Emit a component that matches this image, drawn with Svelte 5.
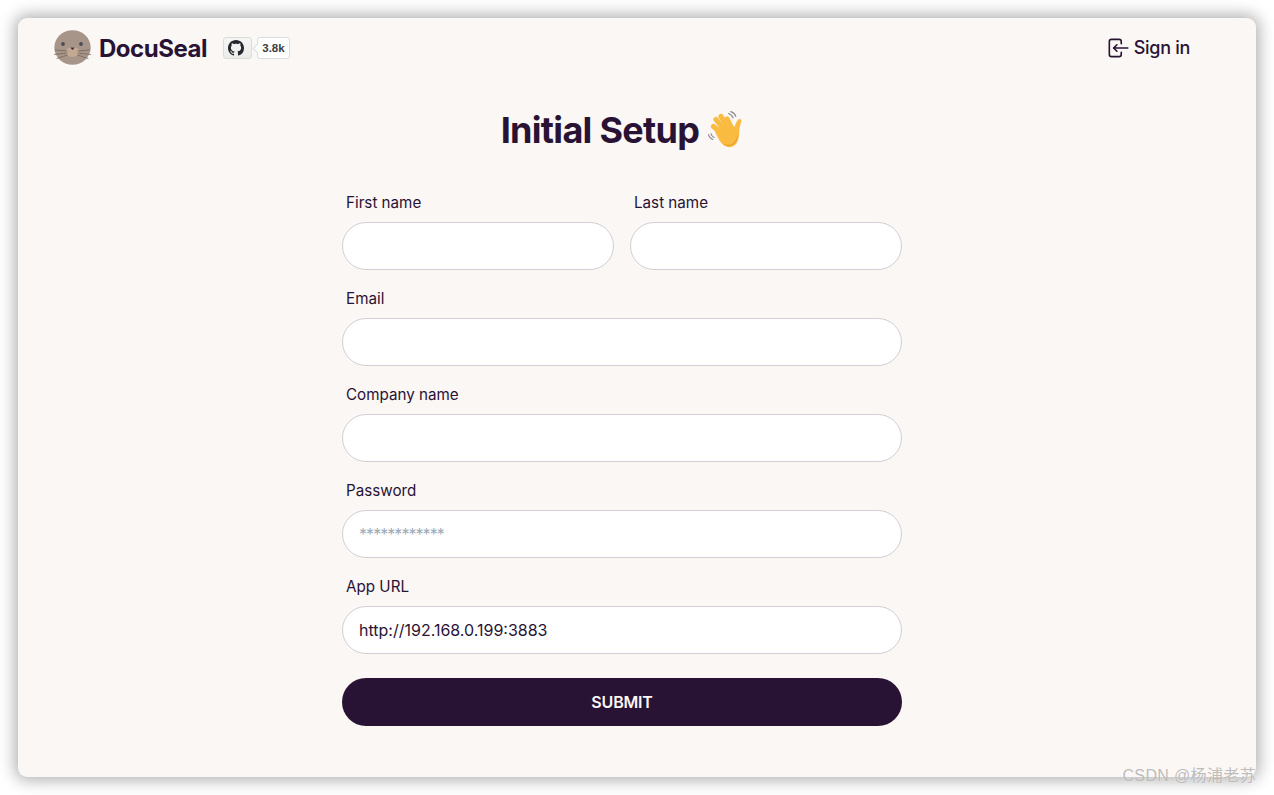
<script>
  const nameFields = ['First name', 'Last name'];
  const wideFields = [
    { label: 'Email', type: 'email', value: '', placeholder: '' },
    { label: 'Company name', type: 'text', value: '', placeholder: '' },
    { label: 'Password', type: 'text', value: '', placeholder: '************' },
    { label: 'App URL', type: 'text', value: 'http://192.168.0.199:3883', placeholder: '' }
  ];
</script>

<div class="page">
  <div class="window">
    <div class="inner">
      <header>
        <div class="brand">
          <a class="logo" href="#top">
            <svg class="seal" viewBox="0 0 37 35" width="37" height="35" aria-hidden="true">
              <ellipse cx="18.5" cy="17.5" rx="18.2" ry="17.3" fill="#a8958a" />
              <ellipse cx="18.5" cy="22" rx="7" ry="5" fill="#c2a994" />
              <circle cx="9" cy="14" r="1.9" fill="#4a4a58" />
              <circle cx="27" cy="14" r="1.9" fill="#4a4a58" />
              <path d="M16.200 17.500h4.600l-2.300 2.500z" fill="#3b3038" />
              <g stroke="#76665d" stroke-width="0.8" fill="none" stroke-linecap="round">
                <path d="M13 21 1.500 20M13 23 .5 24.500M13.500 25 3 28.500" />
                <path d="M24 21 35.500 20M24 23 36.500 24.500M23.500 25 34 28.500" />
              </g>
            </svg>
            <span class="wordmark">DocuSeal</span>
          </a>
          <div class="gh">
            <span class="gh-btn">
              <svg viewBox="0 0 16 16" width="16" height="16" aria-hidden="true"><path fill="#24292f" d="M8 0C3.58 0 0 3.58 0 8c0 3.54 2.29 6.53 5.47 7.59.4.07.55-.17.55-.38 0-.19-.01-.82-.01-1.49-2.01.37-2.53-.49-2.69-.94-.09-.23-.48-.94-.82-1.13-.28-.15-.68-.52-.01-.53.63-.01 1.08.58 1.23.82.72 1.21 1.87.87 2.33.66.07-.52.28-.87.51-1.07-1.78-.2-3.64-.89-3.64-3.95 0-.87.31-1.59.82-2.15-.08-.2-.36-1.02.08-2.12 0 0 .67-.21 2.2.82.64-.18 1.32-.27 2-.27.68 0 1.36.09 2 .27 1.53-1.04 2.2-.82 2.2-.82.44 1.1.16 1.92.08 2.12.51.56.82 1.27.82 2.15 0 3.07-1.87 3.75-3.65 3.95.29.25.54.73.54 1.48 0 1.07-.01 1.93-.01 2.2 0 .21.15.46.55.38A8.013 8.013 0 0016 8c0-4.42-3.58-8-8-8z"/></svg>
            </span>
            <span class="gh-count">3.8k</span>
          </div>
        </div>
        <a class="signin" href="#top">
          <svg viewBox="0 0 24 24" width="26" height="26" fill="none" stroke="currentColor" stroke-width="1.5" stroke-linecap="round" stroke-linejoin="round" aria-hidden="true">
            <path d="M15 8v-2a2 2 0 0 0 -2 -2h-7a2 2 0 0 0 -2 2v12a2 2 0 0 0 2 2h7a2 2 0 0 0 2 -2v-2" />
            <path d="M21 12h-13l3 -3" />
            <path d="M11 15l-3 -3" />
          </svg>
          <span>Sign in</span>
        </a>
      </header>

      <main>
        <h1>
          <span>Initial Setup</span>
          <svg class="wave" viewBox="0 0 38 38" width="38" height="38" aria-hidden="true">
            <g stroke="#85858c" stroke-width="1.100" fill="none" stroke-linecap="round">
              <path d="M21.500 2.500c2.200.6 3.700 2 4.600 4.300" />
              <path d="M23.800.6c2.400.7 4.100 2.400 5 4.800" />
              <path d="M1.500 23.500c.5 2.400 1.900 4 4.300 5" />
              <path d="M4 22.700c.4 1.900 1.400 3.100 3.100 3.900" />
            </g>
            <g stroke="#f9bb40" stroke-width="5.200" fill="none" stroke-linecap="round">
              <path d="M17 24 6.500 15.500" />
              <path d="M19 21 9 8.500" />
              <path d="M22 19 14 5.500" />
              <path d="M25 18 20 8" />
            </g>
            <path fill="#f9bb40" d="M8 18 22 11 27.500 16c1-3.400 2.600-6.400 4.200-7.700 1.500-1 3.300.3 2.700 2-1.200 3.200-1.900 6.300-2.100 10.200-.2 4.500-.6 9-3.300 12.500-2.500 3-6.200 3.800-9.500 2.600-5-1.900-8.800-8-12.500-17.600z" />
            <path fill="#eb9c2d" d="M15.500 32.500c4 3.300 9.400 3.200 12.600-.4 2.300-2.800 2.800-6.300 3.200-10-.9 3.800-2 7-4.400 9.300-2.900 2.600-7.100 3-11.400 1.100z" />
          </svg>
        </h1>

        <form onsubmit={(e) => e.preventDefault()}>
          <div class="row">
            {#each nameFields as label}
              <div class="field">
                <label for={label}>{label}</label>
                <input id={label} type="text" />
              </div>
            {/each}
          </div>
          {#each wideFields as f}
            <div class="field">
              <label for={f.label}>{f.label}</label>
              <input id={f.label} type={f.type} value={f.value} placeholder={f.placeholder} />
            </div>
          {/each}
          <button type="submit">SUBMIT</button>
        </form>
      </main>
    </div>
  </div>
  <span class="watermark">CSDN @杨浦老苏</span>
</div>

<style>
  :global(body) {
    margin: 0;
    background: #ffffff;
  }
  .page {
    position: relative;
    height: 795px;
    box-sizing: border-box;
    padding: 18px;
    overflow: hidden;
    font-family: Inter, "Noto Sans CJK SC", sans-serif;
    color: #291334;
  }
  .window {
    height: 759px;
    background: #faf7f5;
    border-radius: 9px;
    box-shadow: 0 0 16px 3px rgba(0, 0, 0, 0.32);
  }
  .inner {
    width: 1208px;
    box-sizing: border-box;
    padding: 0 36px;
  }
  header {
    display: flex;
    justify-content: space-between;
    align-items: center;
    height: 60px;
  }
  .brand {
    display: flex;
    align-items: center;
    gap: 16px;
  }
  .logo {
    display: flex;
    align-items: center;
    gap: 8px;
    height: 37px;
    color: inherit;
    text-decoration: none;
  }
  .seal {
    display: block;
    margin-bottom: 2px;
  }
  .wordmark {
    padding-top: 2px;
    font-size: 24px;
    font-weight: 700;
    line-height: 32px;
    letter-spacing: -0.48px;
  }
  .gh {
    display: flex;
    align-items: center;
    gap: 5px;
    font-family: "Liberation Sans", sans-serif;
  }
  .gh-btn {
    display: flex;
    align-items: center;
    justify-content: center;
    box-sizing: border-box;
    width: 29px;
    height: 22px;
    border: 1px solid #dcdcdc;
    border-radius: 3px;
    background: linear-gradient(#f6f6f5, #ebebea);
  }
  .gh-btn svg {
    margin-left: -2px;
  }
  .gh-count {
    position: relative;
    display: flex;
    align-items: center;
    justify-content: center;
    box-sizing: border-box;
    width: 33px;
    height: 22px;
    border: 1px solid #dcdcdc;
    border-radius: 3px;
    background: #fff;
    font-size: 11.5px;
    font-weight: 700;
    color: #3b3d42;
  }
  .gh-count::before {
    content: "";
    position: absolute;
    left: -4px;
    top: 7px;
    width: 6px;
    height: 6px;
    background: #fff;
    border-left: 1px solid #dcdcdc;
    border-bottom: 1px solid #dcdcdc;
    transform: rotate(45deg);
  }
  .signin {
    display: flex;
    align-items: center;
    gap: 3px;
    font-size: 18px;
    font-weight: 500;
    line-height: 28px;
    letter-spacing: -0.3px;
    color: inherit;
    text-decoration: none;
  }
  main {
    width: 560px;
    margin: 0 auto;
  }
  h1 {
    display: flex;
    justify-content: center;
    align-items: center;
    gap: 8px;
    margin: 32px 0 0;
    padding-left: 2px;
    height: 40px;
    font-size: 36px;
    font-weight: 700;
    line-height: 40px;
    letter-spacing: -0.7px;
  }
  .wave {
    display: block;
  }
  form {
    display: flex;
    flex-direction: column;
    margin-top: 40px;
  }
  .row {
    display: flex;
    gap: 16px;
  }
  .row .field {
    flex: 1;
    min-width: 0;
  }
  .field {
    display: flex;
    flex-direction: column;
    height: 96px;
  }
  label {
    display: block;
    padding: 1px 4px 7px;
    font-size: 15.2px;
    line-height: 24px;
  }
  input {
    box-sizing: border-box;
    width: 100%;
    height: 48px;
    padding: 0 16px;
    border: 1px solid #d4cdd6;
    border-radius: 24px;
    background: #fff;
    font-family: inherit;
    font-size: 16px;
    color: inherit;
    outline: none;
  }
  input::placeholder {
    color: #a0abba;
    opacity: 1;
    letter-spacing: -0.95px;
  }
  button {
    height: 48px;
    margin-top: 8px;
    border: 0;
    border-radius: 24px;
    background: #291334;
    color: #faf7f5;
    font-family: inherit;
    font-size: 16px;
    font-weight: 600;
    letter-spacing: -0.2px;
  }
  .watermark {
    position: absolute;
    right: 18px;
    top: 766px;
    font-size: 16px;
    line-height: 20px;
    letter-spacing: 0.35px;
    font-family: "Liberation Sans", "Noto Sans CJK SC", sans-serif;
    color: rgba(150, 150, 150, 0.65);
    text-shadow: 0 0 1px rgba(255, 255, 255, 0.9);
    white-space: nowrap;
  }
</style>
